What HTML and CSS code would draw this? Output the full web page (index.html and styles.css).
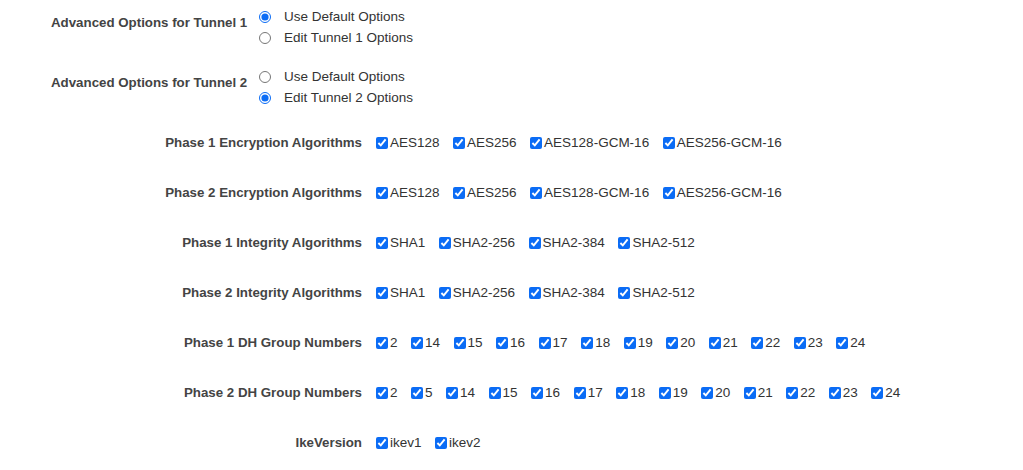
FILE: index.html
```html
<!doctype html>
<html lang="en">
<head>
  <meta charset="utf-8">
  <title>Tunnel options</title>
  <link rel="stylesheet" href="styles.css">
</head>
<body>
<div class="page">
  <div class="adv-group">
    <div class="adv-label">Advanced Options for Tunnel 1</div>
    <div class="choices">
      <label><input type="radio" name="t1" checked> Use Default Options</label>
      <label><input type="radio" name="t1"> Edit Tunnel 1 Options</label>
    </div>
  </div>
  <div class="adv-group">
    <div class="adv-label">Advanced Options for Tunnel 2</div>
    <div class="choices">
      <label><input type="radio" name="t2"> Use Default Options</label>
      <label><input type="radio" name="t2" checked> Edit Tunnel 2 Options</label>
    </div>
  </div>

  <div class="opts">
    <div class="opt-label">Phase 1 Encryption Algorithms</div>
    <div class="checks">
      <label><input type="checkbox" checked>AES128</label>
      <label><input type="checkbox" checked>AES256</label>
      <label><input type="checkbox" checked>AES128-GCM-16</label>
      <label><input type="checkbox" checked>AES256-GCM-16</label>
    </div>

    <div class="opt-label">Phase 2 Encryption Algorithms</div>
    <div class="checks">
      <label><input type="checkbox" checked>AES128</label>
      <label><input type="checkbox" checked>AES256</label>
      <label><input type="checkbox" checked>AES128-GCM-16</label>
      <label><input type="checkbox" checked>AES256-GCM-16</label>
    </div>

    <div class="opt-label">Phase 1 Integrity Algorithms</div>
    <div class="checks">
      <label><input type="checkbox" checked>SHA1</label>
      <label><input type="checkbox" checked>SHA2-256</label>
      <label><input type="checkbox" checked>SHA2-384</label>
      <label><input type="checkbox" checked>SHA2-512</label>
    </div>

    <div class="opt-label">Phase 2 Integrity Algorithms</div>
    <div class="checks">
      <label><input type="checkbox" checked>SHA1</label>
      <label><input type="checkbox" checked>SHA2-256</label>
      <label><input type="checkbox" checked>SHA2-384</label>
      <label><input type="checkbox" checked>SHA2-512</label>
    </div>

    <div class="opt-label">Phase 1 DH Group Numbers</div>
    <div class="checks">
      <label><input type="checkbox" checked>2</label>
      <label><input type="checkbox" checked>14</label>
      <label><input type="checkbox" checked>15</label>
      <label><input type="checkbox" checked>16</label>
      <label><input type="checkbox" checked>17</label>
      <label><input type="checkbox" checked>18</label>
      <label><input type="checkbox" checked>19</label>
      <label><input type="checkbox" checked>20</label>
      <label><input type="checkbox" checked>21</label>
      <label><input type="checkbox" checked>22</label>
      <label><input type="checkbox" checked>23</label>
      <label><input type="checkbox" checked>24</label>
    </div>

    <div class="opt-label">Phase 2 DH Group Numbers</div>
    <div class="checks">
      <label><input type="checkbox" checked>2</label>
      <label><input type="checkbox" checked>5</label>
      <label><input type="checkbox" checked>14</label>
      <label><input type="checkbox" checked>15</label>
      <label><input type="checkbox" checked>16</label>
      <label><input type="checkbox" checked>17</label>
      <label><input type="checkbox" checked>18</label>
      <label><input type="checkbox" checked>19</label>
      <label><input type="checkbox" checked>20</label>
      <label><input type="checkbox" checked>21</label>
      <label><input type="checkbox" checked>22</label>
      <label><input type="checkbox" checked>23</label>
      <label><input type="checkbox" checked>24</label>
    </div>

    <div class="opt-label">IkeVersion</div>
    <div class="checks">
      <label><input type="checkbox" checked>ikev1</label>
      <label><input type="checkbox" checked>ikev2</label>
    </div>
  </div>
</div>
</body>
</html>
```

FILE: styles.css
```css
body {
  margin: 0;
  background: white;
  color: #333;
  font-family: "Liberation Sans", Arial, sans-serif;
  font-size: 13.5px;
  line-height: 20px;
}

.page {
  padding-top: 7px;
}

/* Tunnel radio groups */
.adv-group {
  display: flex;
  margin-bottom: 19px;
}
.adv-label {
  width: 196px;
  margin-left: 51px;
  margin-right: 12px;
  padding-top: 6px;
  white-space: nowrap;
  font-size: 13.3px;
  font-weight: bold;
  color: #444;
}
.choices {
  display: flex;
  flex-direction: column;
  line-height: 20.5px;
}
.choices label {
  display: flex;
  align-items: center;
}
.choices input {
  width: 12px;
  height: 12px;
  margin: 0 13px 0 0;
  accent-color: #0b6cf5;
}

/* Algorithm checkboxes */
.opts {
  display: grid;
  grid-template-columns: 376px auto;
  row-gap: 30px;
  margin-top: 25px;
}
.opt-label {
  text-align: right;
  padding-right: 14px;
  white-space: nowrap;
  font-size: 13.3px;
  font-weight: bold;
  color: #444;
}
.checks {
  display: flex;
  align-items: center;
}
.checks label {
  display: flex;
  align-items: center;
  margin-right: 13.5px;
}
.checks input {
  width: 12px;
  height: 12px;
  margin: 0 2px 0 0;
  accent-color: #0b6cf5;
}
```
